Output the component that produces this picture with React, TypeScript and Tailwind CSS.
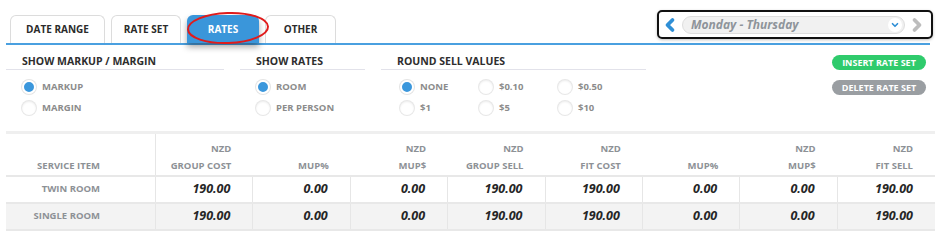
import { ChevronLeft, ChevronRight, ChevronDown } from 'lucide-react';

const tabs = [
  { label: 'DATE RANGE', w: 'w-[95px]' },
  { label: 'RATE SET', w: 'w-[70px]' },
  { label: 'RATES', w: 'w-[72px]', active: true },
  { label: 'OTHER', w: 'w-[71px]' },
];

const cols = [
  ['', 'SERVICE ITEM'],
  ['NZD', 'GROUP COST'],
  ['', 'MUP%'],
  ['NZD', 'MUP$'],
  ['NZD', 'GROUP SELL'],
  ['NZD', 'FIT COST'],
  ['', 'MUP%'],
  ['NZD', 'MUP$'],
  ['NZD', 'FIT SELL'],
];

const rows = [
  { name: 'TWIN ROOM', vals: ['190.00', '0.00', '0.00', '190.00', '190.00', '0.00', '0.00', '190.00'] },
  { name: 'SINGLE ROOM', vals: ['190.00', '0.00', '0.00', '190.00', '190.00', '0.00', '0.00', '190.00'] },
];

function Radio({ label, checked }: { label: string; checked?: boolean }) {
  return (
    <div className="flex items-center gap-[6px] h-[14px]">
      <span
        className={
          checked
            ? 'w-[14px] h-[14px] rounded-full bg-[#3b97dc] border-2 border-white shadow-[0_0_0_1px_#e4e4e4]'
            : 'w-[14px] h-[14px] rounded-full bg-white shadow-[0_0_0_1px_#e8e8e8,inset_0_1px_2px_rgba(0,0,0,0.07)]'
        }
      />
      <span className="text-[9.5px] font-bold text-[#8c8c8c] leading-none">{label}</span>
    </div>
  );
}

function Section({ title, w, children }: { title: string; w: string; children: React.ReactNode }) {
  return (
    <div className={`${w} pt-[9px]`}>
      <div className="pl-[16px] border-b border-[#e2e2ea] text-[10.5px] leading-[15px] font-bold text-[#2e2e2e]">{title}</div>
      <div className="pl-[16px] pt-[10px]">{children}</div>
    </div>
  );
}

export default function App() {
  return (
    <div className="w-[945px] h-[243px] bg-white overflow-hidden" style={{ fontFamily: '"Open Sans", "Liberation Sans", sans-serif' }}>
      <div className="pl-[6px] pr-[12px]">
        {/* Tabs + day selector */}
        <div className="relative h-[43px] flex justify-between items-start">
          <div className="flex items-end gap-[6px] ml-[4px] h-[43px]">
            {tabs.map((t) => (
              <div
                key={t.label}
                className={
                  t.active
                    ? `${t.w} h-[28px] rounded-t-[6px] bg-[#3a96da] text-white flex items-center justify-center text-[10px] font-bold shadow-[0_4px_6px_rgba(0,0,0,0.35)]`
                    : `${t.w} h-[28px] rounded-t-[6px] border border-b-0 border-[#dcdcdc] bg-white text-[#2b2b2b] flex items-center justify-center text-[10px] font-bold`
                }
              >
                {t.label}
              </div>
            ))}
          </div>
          <svg className="absolute left-[175px] top-[10px]" width="92" height="35" viewBox="0 0 92 35">
            <ellipse cx="47" cy="18" rx="40" ry="15" fill="none" stroke="#e01b1b" strokeWidth="2" transform="rotate(-2 47 18)" />
          </svg>

          <div className="mt-[10px] w-[276px] h-[29px] border-2 border-[#111] rounded-[5px] flex items-center pl-[1px] pr-[4px] gap-[2px] shadow-[0_1px_3px_rgba(0,0,0,0.25)]">
            <ChevronLeft className="w-[20px] h-[20px] text-[#2f8fd6]" strokeWidth={4.5} />
            <div className="flex-1 h-[18px] rounded-full bg-[#f1f1f1] border border-[#dedede] flex items-center pl-[8px] pr-[2px]">
              <span className="flex-1 text-[12px] font-bold italic text-[#8e949a] leading-none">Monday - Thursday</span>
              <span className="w-[14px] h-[14px] rounded-full bg-white flex items-center justify-center">
                <ChevronDown className="w-[10px] h-[10px] text-[#2f8fd6]" strokeWidth={4} />
              </span>
            </div>
            <ChevronRight className="w-[20px] h-[20px] text-[#bdbdbd]" strokeWidth={4.5} />
          </div>
        </div>
        <div className="h-[2px] bg-[#4aa0e0] mr-[3px]" />

        {/* Options */}
        <div className="flex h-[86px]">
          <div className="flex gap-[16px]">
            <Section title="SHOW MARKUP / MARGIN" w="w-[218px]">
              <div className="flex flex-col gap-[7px]">
                <Radio label="MARKUP" checked />
                <Radio label="MARGIN" />
              </div>
            </Section>
            <Section title="SHOW RATES" w="w-[125px]">
              <div className="flex flex-col gap-[7px]">
                <Radio label="ROOM" checked />
                <Radio label="PER PERSON" />
              </div>
            </Section>
            <Section title="ROUND SELL VALUES" w="w-[265px]">
              <div className="grid grid-cols-[79px_79px_79px] gap-y-[7px] pl-[3px]">
                <Radio label="NONE" checked />
                <Radio label="$0.10" />
                <Radio label="$0.50" />
                <Radio label="$1" />
                <Radio label="$5" />
                <Radio label="$10" />
              </div>
            </Section>
          </div>
          <div className="ml-auto mr-[7px] pt-[10px] flex flex-col gap-[10px]">
            <div className="w-[94px] h-[15px] rounded-full bg-[#2fcb6c] text-white text-[9px] font-bold flex items-center justify-center">INSERT RATE SET</div>
            <div className="w-[94px] h-[15px] rounded-full bg-[#9a9ea2] text-white text-[9px] font-bold flex items-center justify-center">DELETE RATE SET</div>
          </div>
        </div>

        {/* Table */}
        <div className="w-[929px] border-t-[3px] border-[#efefef]">
          <div className="grid grid-cols-[150px_repeat(8,1fr)] border-b-2 border-[#e8e8e8]">
            {cols.map(([top, label], i) => (
              <div
                key={i}
                className={`h-[41px] flex flex-col justify-end items-end text-[9.5px] font-bold text-[#8d9196] leading-[17px] pb-[1px] ${i === 0 ? 'pr-[55px] border-r border-[#e6e6e6]' : 'pr-[22px]'}`}
              >
                <span>{top}</span>
                <span>{label}</span>
              </div>
            ))}
          </div>
          {rows.map((r, ri) => (
            <div
              key={r.name}
              className={`grid grid-cols-[150px_repeat(8,1fr)] border-b-2 border-[#e8e8e8] ${ri % 2 === 1 ? 'bg-[#f3f3f3]' : 'bg-white'}`}
            >
              <div className="h-[25px] flex items-center justify-end pr-[55px] border-r border-[#e6e6e6] text-[9.5px] font-bold text-[#8d9196]">{r.name}</div>
              {r.vals.map((v, i) => (
                <div key={i} className={`h-[25px] flex items-center justify-end pr-[22px] text-[12.5px] font-bold italic text-[#262626] ${i < 7 ? 'border-r border-[#e6e6e6]' : ''}`}>
                  {v}
                </div>
              ))}
            </div>
          ))}
        </div>
      </div>
    </div>
  );
}
